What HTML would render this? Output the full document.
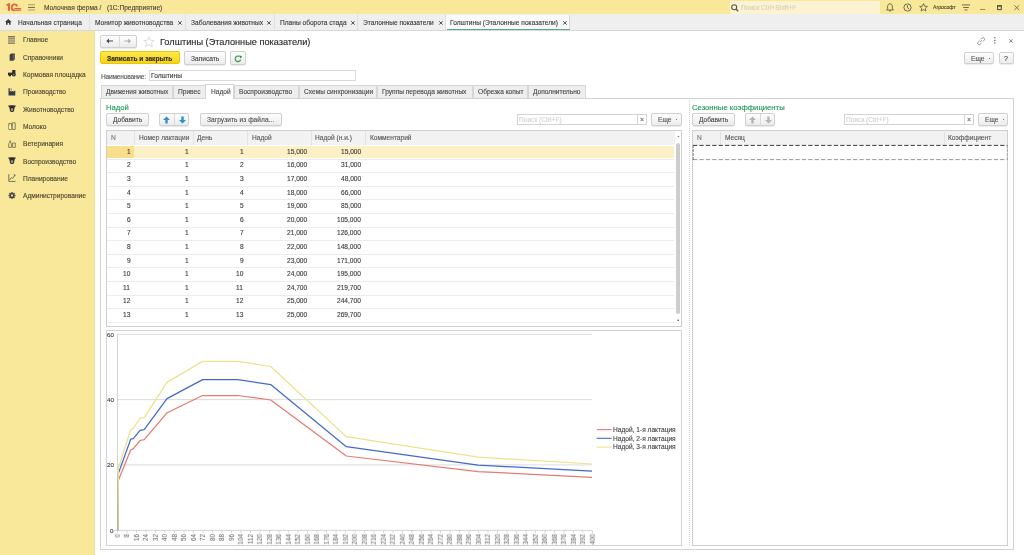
<!DOCTYPE html>
<html><head><meta charset="utf-8">
<style>
*{box-sizing:border-box}
html,body{margin:0;padding:0}
body{width:1024px;height:555px;overflow:hidden;position:relative;background:#fff;font-family:"Liberation Sans",sans-serif;font-size:6.6px;color:#3a3a3a}
.a{position:absolute}
.t{position:absolute;white-space:nowrap;line-height:1;will-change:transform;-webkit-text-stroke:0.12px currentColor}
.btn{position:absolute;background:linear-gradient(#fdfdfd,#ececec);border:1px solid #d0d0d0;border-radius:2px;box-shadow:0 0.6px 0.6px #d8d8d8}
svg{position:absolute;overflow:visible}
#wrap{position:absolute;left:0;top:0;width:1024px;height:555px}
</style></head><body><div id="wrap">
<div class="a" style="left:0.00px;top:0.00px;width:1024.00px;height:14.40px;background:#f9e899"></div><svg style="left:4.00px;top:1.00px" width="20" height="12" viewBox="0 0 20 12"><g fill="#e2603e"><path d="M2.4 3.4 L4.4 2.2 L5.9 2.2 L5.9 9.7 L3.9 9.7 L3.9 4.6 L2.8 5.2 Z"/></g><path d="M13.2 5.2 C12.8 4.0 11.8 3.3 10.6 3.3 C8.8 3.3 7.7 4.8 7.7 6.6 C7.7 8.4 8.8 9.6 10.6 9.6" fill="none" stroke="#e2603e" stroke-width="1.7"/><rect x="10.4" y="7.0" width="6.8" height="1.1" fill="#e2603e"/><rect x="10.4" y="8.6" width="6.8" height="1.2" fill="#e2603e"/></svg><svg style="left:27.80px;top:4.00px" width="7" height="7" viewBox="0 0 7 7"><rect x="0" y="0.2" width="7" height="1" fill="#a89c6a"/><rect x="0" y="2.9" width="7" height="1" fill="#6e6542"/><rect x="0" y="5.5" width="7" height="1" fill="#a89c6a"/></svg><div class="t" style="left:43.60px;top:5.22px;font-size:6.6px;color:#4a4536;">Молочная ферма /</div><div class="t" style="left:107.20px;top:5.22px;font-size:6.6px;color:#4a4536;">(1С:Предприятие)</div><div class="a" style="left:729.70px;top:1.00px;width:150.30px;height:13.00px;background:#fcf3d2;border-radius:1px"></div><svg style="left:731.00px;top:4.00px" width="8" height="8" viewBox="0 0 8 8"><circle cx="3.2" cy="3.2" r="2.5" fill="none" stroke="#555" stroke-width="1.1"/><line x1="5" y1="5" x2="7.2" y2="7.2" stroke="#555" stroke-width="1.3"/></svg><div class="t" style="left:741.00px;top:5.22px;font-size:6.6px;color:#d6cfb5;">Поиск Ctrl+Shift+F</div><svg style="left:885.50px;top:3.00px" width="8" height="9" viewBox="0 0 8 9"><path d="M4 0.8 C2.3 0.8 1.6 2.2 1.6 3.8 L1.6 5.8 L0.6 7 L7.4 7 L6.4 5.8 L6.4 3.8 C6.4 2.2 5.7 0.8 4 0.8 Z" fill="none" stroke="#5f5a45" stroke-width="0.9"/><path d="M3 7.8 L5 7.8" stroke="#5f5a45" stroke-width="0.9"/></svg><svg style="left:902.50px;top:3.00px" width="9" height="9" viewBox="0 0 9 9"><circle cx="4.5" cy="4.5" r="3.6" fill="none" stroke="#5f5a45" stroke-width="0.9"/><path d="M4.5 2.3 L4.5 4.7 L6 5.8" fill="none" stroke="#5f5a45" stroke-width="0.9"/></svg><svg style="left:918.50px;top:2.80px" width="9" height="9" viewBox="0 0 9 9"><path d="M4.5 0.6 L5.6 3.2 L8.4 3.4 L6.3 5.2 L6.9 8 L4.5 6.5 L2.1 8 L2.7 5.2 L0.6 3.4 L3.4 3.2 Z" fill="none" stroke="#5f5a45" stroke-width="0.85"/></svg><div class="t" style="left:933.30px;top:5.34px;font-size:5.1px;color:#4a4536;">Агрософт</div><svg style="left:962.00px;top:4.00px" width="8" height="8" viewBox="0 0 8 8"><rect x="0" y="0.5" width="8" height="0.9" fill="#5f5a45"/><rect x="1.2" y="3" width="5.6" height="0.9" fill="#5f5a45"/><rect x="2.5" y="5.5" width="3" height="0.9" fill="#5f5a45"/></svg><svg style="left:980.00px;top:9.00px" width="6" height="2" viewBox="0 0 6 2"><rect x="0" y="0" width="5.3" height="0.9" fill="#8f8660"/></svg><svg style="left:997.20px;top:4.80px" width="6" height="6" viewBox="0 0 6 6"><rect x="0.6" y="0.6" width="3.7" height="4" fill="none" stroke="#5e573c" stroke-width="1.1"/><rect x="0.2" y="0.2" width="4.5" height="1.5" fill="#5e573c"/></svg><svg style="left:1013.80px;top:4.80px" width="6" height="6" viewBox="0 0 6 6"><path d="M0.3 0.3 L5.2 5 M5.2 0.3 L0.3 5" stroke="#6a6346" stroke-width="0.85"/></svg><div class="a" style="left:0.00px;top:14.30px;width:1024.00px;height:16.70px;background:#efefef;border-bottom:1px solid #d9d9d9"></div><svg style="left:5.40px;top:19.20px" width="7" height="6" viewBox="0 0 7 6"><path d="M3.3 0 L6.6 3 L5.6 3 L5.6 5.8 L4 5.8 L4 4 L2.6 4 L2.6 5.8 L1 5.8 L1 3 L0 3 Z" fill="#3c3c3c"/></svg><div class="t" style="left:17.80px;top:20.42px;font-size:6.6px;color:#3a3a3a;">Начальная страница</div><div class="a" style="left:89.40px;top:14.30px;width:1.00px;height:15.90px;background:#e0e0e0"></div><div class="a" style="left:185.00px;top:14.30px;width:1.00px;height:15.90px;background:#e0e0e0"></div><div class="a" style="left:273.80px;top:14.30px;width:1.00px;height:15.90px;background:#e0e0e0"></div><div class="a" style="left:357.40px;top:14.30px;width:1.00px;height:15.90px;background:#e0e0e0"></div><div class="a" style="left:445.30px;top:14.30px;width:1.00px;height:15.90px;background:#e0e0e0"></div><div class="t" style="left:95.30px;top:20.42px;font-size:6.6px;color:#3a3a3a;">Монитор животноводства</div><svg style="left:178.30px;top:20.50px" width="4" height="4" viewBox="0 0 4 4"><path d="M0.2 0.2 L3.6 3.6 M3.6 0.2 L0.2 3.6" stroke="#4a4a4a" stroke-width="1"/></svg><div class="t" style="left:190.90px;top:20.42px;font-size:6.6px;color:#3a3a3a;">Заболевания животных</div><svg style="left:267.10px;top:20.50px" width="4" height="4" viewBox="0 0 4 4"><path d="M0.2 0.2 L3.6 3.6 M3.6 0.2 L0.2 3.6" stroke="#4a4a4a" stroke-width="1"/></svg><div class="t" style="left:279.70px;top:20.42px;font-size:6.6px;color:#3a3a3a;">Планы оборота стада</div><svg style="left:350.70px;top:20.50px" width="4" height="4" viewBox="0 0 4 4"><path d="M0.2 0.2 L3.6 3.6 M3.6 0.2 L0.2 3.6" stroke="#4a4a4a" stroke-width="1"/></svg><div class="t" style="left:363.30px;top:20.42px;font-size:6.6px;color:#3a3a3a;">Эталонные показатели</div><svg style="left:438.60px;top:20.50px" width="4" height="4" viewBox="0 0 4 4"><path d="M0.2 0.2 L3.6 3.6 M3.6 0.2 L0.2 3.6" stroke="#4a4a4a" stroke-width="1"/></svg><div class="a" style="left:446.30px;top:14.60px;width:124.20px;height:15.80px;background:#fafafa;border-right:1px solid #d9d9d9"></div><div class="a" style="left:447.00px;top:29.00px;width:123.00px;height:1.30px;background:#4fae82"></div><div class="t" style="left:450.00px;top:20.42px;font-size:6.6px;color:#3a3a3a;">Голштины (Эталонные показатели)</div><svg style="left:563.20px;top:20.50px" width="4" height="4" viewBox="0 0 4 4"><path d="M0.2 0.2 L3.6 3.6 M3.6 0.2 L0.2 3.6" stroke="#4a4a4a" stroke-width="1"/></svg><div class="a" style="left:0.00px;top:31.00px;width:94.50px;height:524.00px;background:#f9e899"></div><div class="a" style="left:94.30px;top:31.00px;width:0.70px;height:524.00px;background:#ede0a0"></div><div class="t" style="left:22.70px;top:37.42px;font-size:6.6px;color:#4a4630;">Главное</div><svg style="left:8.20px;top:35.70px" width="8" height="8" viewBox="0 0 8 8"><g fill="#7d7656"><rect x="0" y="0" width="7" height="1.2"/><rect x="0" y="2.2" width="7" height="1.2"/><rect x="0" y="4.4" width="7" height="1.2"/><rect x="0" y="6.6" width="7" height="1.2"/></g><rect x="0" y="1.2" width="7" height="1" fill="#b3ab86"/><rect x="0" y="3.4" width="7" height="1" fill="#b3ab86"/><rect x="0" y="5.6" width="7" height="1" fill="#b3ab86"/></svg><div class="t" style="left:22.70px;top:54.75px;font-size:6.6px;color:#4a4630;">Справочники</div><svg style="left:8.20px;top:53.03px" width="8" height="8" viewBox="0 0 8 8"><path d="M1.6 1.8 L3.2 0.4 L6.8 0.4 L6.8 6.2 L5.2 7.8 L1.6 7.8 Z" fill="#404040"/><path d="M5.2 1.8 L6.8 0.4 L6.8 6.2 L5.2 7.8 Z" fill="#6a6a6a"/></svg><div class="t" style="left:22.70px;top:72.08px;font-size:6.6px;color:#4a4630;">Кормовая площадка</div><svg style="left:8.20px;top:70.36px" width="8" height="8" viewBox="0 0 8 8"><g fill="#2e2e2e"><rect x="4.2" y="0" width="3.2" height="3.2"/><rect x="0" y="2.6" width="5" height="2.4"/><circle cx="1.8" cy="5.2" r="1.2"/><circle cx="5.8" cy="4.6" r="2"/></g><circle cx="5.8" cy="4.6" r="0.8" fill="#8a8a8a"/></svg><div class="t" style="left:22.70px;top:89.41px;font-size:6.6px;color:#4a4630;">Производство</div><svg style="left:8.20px;top:87.69px" width="8" height="8" viewBox="0 0 8 8"><path d="M0.5 7.5 L0.5 0.2 L1.8 0.2 L1.8 3.5 L3.5 2.4 L3.5 3.8 L5.3 2.4 L5.3 3.8 L7.3 2.4 L7.3 7.5 Z" fill="#343a48"/><rect x="2.3" y="0.6" width="1.6" height="1" fill="#6f7380"/></svg><div class="t" style="left:22.70px;top:106.74px;font-size:6.6px;color:#4a4630;">Животноводство</div><svg style="left:8.20px;top:105.02px" width="8" height="8" viewBox="0 0 8 8"><path d="M0 0.8 C1.5 0 6.5 0 8 0.8 L6.6 2.6 L6 6 C5.5 7.4 2.5 7.4 2 6 L1.4 2.6 Z" fill="#2d2d2d"/><ellipse cx="4" cy="4.6" rx="1.3" ry="1.6" fill="#9a937a"/></svg><div class="t" style="left:22.70px;top:124.07px;font-size:6.6px;color:#4a4630;">Молоко</div><svg style="left:8.20px;top:122.35px" width="8" height="8" viewBox="0 0 8 8"><g fill="none" stroke="#6d6748" stroke-width="0.8"><path d="M0.8 1.5 L3.6 1.5 L3.6 7.4 L0.8 7.4 Z"/><path d="M4.2 0.8 L7.2 0.8 L7.2 7.4 L4.2 7.4 Z"/></g><rect x="1.2" y="4" width="2" height="3" fill="#fff7d0"/></svg><div class="t" style="left:22.70px;top:141.40px;font-size:6.6px;color:#4a4630;">Ветеринария</div><svg style="left:8.20px;top:139.68px" width="8" height="8" viewBox="0 0 8 8"><g fill="none" stroke="#6d6748" stroke-width="0.8"><path d="M1.8 0.6 L1.8 2.4 L0.7 3.8 L0.7 7.4 L3.4 7.4 L3.4 3.8 L2.6 2.4 L2.6 0.6"/><path d="M4.6 3 L4.6 7.4 L7.3 7.4 L7.3 3 Z"/></g></svg><div class="t" style="left:22.70px;top:158.73px;font-size:6.6px;color:#4a4630;">Воспроизводство</div><svg style="left:8.20px;top:157.01px" width="8" height="8" viewBox="0 0 8 8"><path d="M0 0.8 C1.5 0 6.5 0 8 0.8 L6.6 2.6 L6 6 C5.5 7.4 2.5 7.4 2 6 L1.4 2.6 Z" fill="#2d2d2d"/><ellipse cx="4" cy="4.6" rx="1.3" ry="1.6" fill="#9a937a"/></svg><div class="t" style="left:22.70px;top:176.06px;font-size:6.6px;color:#4a4630;">Планирование</div><svg style="left:8.20px;top:174.34px" width="8" height="8" viewBox="0 0 8 8"><g fill="none" stroke="#555" stroke-width="0.8"><path d="M0.8 0.2 L0.8 7.4 L7.5 7.4"/><path d="M1.5 6 L3.5 3.4 L4.6 4.5 L6.8 1.2"/></g><path d="M5.4 0.6 L7.4 0.4 L7.2 2.4 Z" fill="#555"/></svg><div class="t" style="left:22.70px;top:193.39px;font-size:6.6px;color:#4a4630;">Администрирование</div><svg style="left:8.20px;top:191.67px" width="8" height="8" viewBox="0 0 8 8"><g fill="#4a4a4a"><circle cx="4" cy="3.5" r="2.6"/><rect x="3.3" y="0" width="1.4" height="7"/><rect x="0.5" y="2.8" width="7" height="1.4"/><rect x="3.3" y="0" width="1.4" height="7" transform="rotate(45 4 3.5)"/><rect x="3.3" y="0" width="1.4" height="7" transform="rotate(-45 4 3.5)"/></g><circle cx="4" cy="3.5" r="1.1" fill="#f9e9a1"/></svg><div class="btn" style="left:100.30px;top:35.30px;width:36.70px;height:12.50px;"></div><div class="a" style="left:118.80px;top:35.80px;width:0.70px;height:11.40px;background:#dcdcdc"></div><svg style="left:106.30px;top:38.00px" width="8" height="6" viewBox="0 0 8 6"><path d="M0.3 3 L3 0.6 L3 2.4 L7 2.4 L7 3.6 L3 3.6 L3 5.4 Z" fill="#444"/></svg><svg style="left:124.30px;top:38.00px" width="8" height="6" viewBox="0 0 8 6"><path d="M7 3 L4.3 0.6 L4.3 2.4 L0.3 2.4 L0.3 3.6 L4.3 3.6 L4.3 5.4 Z" fill="#aaa"/></svg><svg style="left:143.00px;top:35.50px" width="12" height="12" viewBox="0 0 12 12"><path d="M6 0.8 L7.5 4.3 L11.2 4.5 L8.3 6.9 L9.3 10.6 L6 8.6 L2.7 10.6 L3.7 6.9 L0.8 4.5 L4.5 4.3 Z" fill="none" stroke="#d5d5d5" stroke-width="0.8"/></svg><div class="t" style="left:160.00px;top:37.67px;font-size:9.2px;color:#262626;">Голштины (Эталонные показатели)</div><svg style="left:976.50px;top:36.50px" width="8" height="8" viewBox="0 0 8 8"><path d="M3.2 4.8 L4.8 3.2 M2.5 3.8 L1.2 5.1 C0.5 5.8 0.5 6.8 1.2 7.3 C1.8 7.9 2.7 7.8 3.3 7.2 L4.5 6 M5.8 4.5 L7 3.3 C7.7 2.6 7.7 1.7 7.1 1.1 C6.5 0.5 5.6 0.6 4.9 1.2 L3.7 2.4" fill="none" stroke="#777" stroke-width="0.8"/></svg><svg style="left:994.40px;top:36.80px" width="2" height="8" viewBox="0 0 2 8"><circle cx="0.8" cy="0.8" r="0.75" fill="#666"/><circle cx="0.8" cy="3.4" r="0.75" fill="#666"/><circle cx="0.8" cy="6" r="0.75" fill="#666"/></svg><svg style="left:1009.00px;top:39.00px" width="4" height="4" viewBox="0 0 4 4"><path d="M0.2 0.2 L3.6 3.6 M3.6 0.2 L0.2 3.6" stroke="#666" stroke-width="0.8"/></svg><div class="a" style="left:100.3px;top:51.4px;width:79.3px;height:13px;background:linear-gradient(#fee94e,#f5d410);border:1px solid #e5c60a;border-radius:2px"></div><div class="t" style="left:107.00px;top:55.62px;font-size:6.6px;color:#2a2a2a;font-weight:bold;">Записать и закрыть</div><div class="btn" style="left:184.00px;top:51.20px;width:42.40px;height:13.60px;"></div><div class="t" style="left:191.00px;top:55.62px;font-size:6.6px;color:#484848;">Записать</div><div class="btn" style="left:230.20px;top:51.20px;width:15.60px;height:13.60px;"></div><svg style="left:234.00px;top:54.60px" width="8" height="8" viewBox="0 0 8 8"><path d="M6.63 4.76 A2.8 2.8 0 1 1 5.4 1.38" fill="none" stroke="#3f9a45" stroke-width="1.15"/><path d="M4.9 0.6 L7.9 0.9 L6.9 3.7 Z" fill="#2f8a3a"/></svg><div class="btn" style="left:964.40px;top:51.60px;width:29.80px;height:12.80px;"></div><div class="t" style="left:971.40px;top:55.72px;font-size:6.6px;color:#555;">Еще</div><div class="a" style="left:989.00px;top:58.00px;width:1.00px;height:1.00px;background:#777"></div><div class="btn" style="left:998.80px;top:51.60px;width:15.20px;height:12.80px;"></div><div class="t" style="left:1004.30px;top:54.63px;font-size:7px;color:#444;">?</div><div class="t" style="left:100.80px;top:73.62px;font-size:6.6px;color:#555;letter-spacing:-0.2px">Наименование:</div><div class="a" style="left:148.50px;top:70.00px;width:207.20px;height:10.70px;border:1px solid #d9d9d9;background:#fff"></div><div class="t" style="left:150.80px;top:73.02px;font-size:6.6px;color:#3a3a3a;">Голштины</div><div class="a" style="left:100.00px;top:98.00px;width:914.00px;height:451.80px;border:1px solid #d3d3d3;background:#fff"></div><div class="a" style="left:100.60px;top:85.00px;width:72.90px;height:13.40px;background:#eeeeee;border:1px solid #d6d6d6;border-bottom:none"></div><div class="t" style="left:105.80px;top:88.72px;font-size:6.6px;color:#484848;">Движения животных</div><div class="a" style="left:173.00px;top:85.00px;width:32.80px;height:13.40px;background:#eeeeee;border:1px solid #d6d6d6;border-bottom:none"></div><div class="t" style="left:178.20px;top:88.72px;font-size:6.6px;color:#484848;">Привес</div><div class="a" style="left:205.30px;top:84.30px;width:28.60px;height:14.70px;background:#fff;border:1px solid #d3d3d3;border-bottom:none"></div><div class="t" style="left:210.50px;top:88.72px;font-size:6.6px;color:#484848;">Надой</div><div class="a" style="left:233.90px;top:85.00px;width:65.40px;height:13.40px;background:#eeeeee;border:1px solid #d6d6d6;border-bottom:none"></div><div class="t" style="left:239.10px;top:88.72px;font-size:6.6px;color:#484848;">Воспроизводство</div><div class="a" style="left:298.80px;top:85.00px;width:78.70px;height:13.40px;background:#eeeeee;border:1px solid #d6d6d6;border-bottom:none"></div><div class="t" style="left:304.00px;top:88.72px;font-size:6.6px;color:#484848;">Схемы синхронизации</div><div class="a" style="left:377.00px;top:85.00px;width:96.30px;height:13.40px;background:#eeeeee;border:1px solid #d6d6d6;border-bottom:none"></div><div class="t" style="left:382.20px;top:88.72px;font-size:6.6px;color:#484848;">Группы перевода животных</div><div class="a" style="left:472.80px;top:85.00px;width:55.20px;height:13.40px;background:#eeeeee;border:1px solid #d6d6d6;border-bottom:none"></div><div class="t" style="left:478.00px;top:88.72px;font-size:6.6px;color:#484848;">Обрезка копыт</div><div class="a" style="left:527.50px;top:85.00px;width:58.60px;height:13.40px;background:#eeeeee;border:1px solid #d6d6d6;border-bottom:none"></div><div class="t" style="left:532.70px;top:88.72px;font-size:6.6px;color:#484848;">Дополнительно</div><div class="t" style="left:106.00px;top:103.69px;font-size:7.7px;color:#199a55;">Надой</div><div class="btn" style="left:106.00px;top:112.60px;width:43.20px;height:13.60px;"></div><div class="t" style="left:112.90px;top:116.82px;font-size:6.6px;color:#484848;">Добавить</div><div class="btn" style="left:159.00px;top:112.60px;width:30.40px;height:13.60px;"></div><div class="a" style="left:174.20px;top:113.50px;width:0.70px;height:11.70px;background:#d8d8d8"></div><svg style="left:163.00px;top:115.50px" width="8" height="8" viewBox="0 0 8 8"><path d="M3.5 0.5 L7 4 L4.7 4 L4.7 7.6 L2.3 7.6 L2.3 4 L0 4 Z" fill="#2c8fd6"/></svg><svg style="left:178.50px;top:115.50px" width="8" height="8" viewBox="0 0 8 8"><path d="M3.5 7.6 L7 4.1 L4.7 4.1 L4.7 0.5 L2.3 0.5 L2.3 4.1 L0 4.1 Z" fill="#2c8fd6"/></svg><div class="btn" style="left:199.50px;top:112.60px;width:82.30px;height:13.60px;"></div><div class="t" style="left:207.00px;top:116.82px;font-size:6.6px;color:#505050;letter-spacing:0.05px">Загрузить из файла...</div><div class="a" style="left:516.60px;top:114.00px;width:130.10px;height:11.00px;border:1px solid #d3d3d3;background:#fff"></div><div class="a" style="left:636.50px;top:114.50px;width:0.70px;height:10.00px;background:#d3d3d3"></div><div class="t" style="left:518.50px;top:116.82px;font-size:6.6px;color:#d2d2d2;">Поиск (Ctrl+F)</div><div class="t" style="left:639.60px;top:116.33px;font-size:7px;color:#666;">×</div><div class="btn" style="left:651.40px;top:112.60px;width:30.40px;height:13.60px;"></div><div class="t" style="left:658.30px;top:116.82px;font-size:6.6px;color:#555;">Еще</div><div class="a" style="left:676.00px;top:119.20px;width:1.00px;height:1.00px;background:#777"></div><div class="a" style="left:106.20px;top:130.40px;width:575.80px;height:196.20px;border:1px solid #cfcfcf;background:#fff"></div><div class="a" style="left:107.20px;top:131.40px;width:567.80px;height:13.60px;background:#f2f2f2"></div><div class="a" style="left:133.70px;top:131.00px;width:0.60px;height:14.00px;background:#e2e2e2"></div><div class="a" style="left:192.70px;top:131.00px;width:0.60px;height:14.00px;background:#e2e2e2"></div><div class="a" style="left:247.00px;top:131.00px;width:0.60px;height:14.00px;background:#e2e2e2"></div><div class="a" style="left:311.10px;top:131.00px;width:0.60px;height:14.00px;background:#e2e2e2"></div><div class="a" style="left:364.90px;top:131.00px;width:0.60px;height:14.00px;background:#e2e2e2"></div><div class="t" style="left:111.00px;top:135.22px;font-size:6.6px;color:#777;">N</div><div class="t" style="left:138.80px;top:135.22px;font-size:6.6px;color:#585858;">Номер лактации</div><div class="t" style="left:197.00px;top:135.22px;font-size:6.6px;color:#585858;">День</div><div class="t" style="left:251.70px;top:135.22px;font-size:6.6px;color:#585858;">Надой</div><div class="t" style="left:315.40px;top:135.22px;font-size:6.6px;color:#585858;">Надой (н.и.)</div><div class="t" style="left:369.60px;top:135.22px;font-size:6.6px;color:#585858;">Комментарий</div><div class="a" style="left:107.20px;top:145.50px;width:567.30px;height:12.50px;background:#fcf0c6"></div><div class="a" style="left:107.20px;top:145.50px;width:26.80px;height:12.50px;background:#f9df8c"></div><div class="a" style="left:107.20px;top:158.50px;width:567.30px;height:0.70px;background:#ececec"></div><div class="t" style="right:893.80px;top:148.72px;font-size:6.6px;text-align:right;">1</div><div class="t" style="right:835.40px;top:148.72px;font-size:6.6px;text-align:right;">1</div><div class="t" style="right:780.70px;top:148.72px;font-size:6.6px;text-align:right;">1</div><div class="t" style="right:716.80px;top:148.72px;font-size:6.6px;text-align:right;">15,000</div><div class="t" style="right:662.80px;top:148.72px;font-size:6.6px;text-align:right;">15,000</div><div class="a" style="left:107.20px;top:172.10px;width:567.30px;height:0.70px;background:#ececec"></div><div class="t" style="right:893.80px;top:162.32px;font-size:6.6px;text-align:right;">2</div><div class="t" style="right:835.40px;top:162.32px;font-size:6.6px;text-align:right;">1</div><div class="t" style="right:780.70px;top:162.32px;font-size:6.6px;text-align:right;">2</div><div class="t" style="right:716.80px;top:162.32px;font-size:6.6px;text-align:right;">16,000</div><div class="t" style="right:662.80px;top:162.32px;font-size:6.6px;text-align:right;">31,000</div><div class="a" style="left:107.20px;top:185.70px;width:567.30px;height:0.70px;background:#ececec"></div><div class="t" style="right:893.80px;top:175.92px;font-size:6.6px;text-align:right;">3</div><div class="t" style="right:835.40px;top:175.92px;font-size:6.6px;text-align:right;">1</div><div class="t" style="right:780.70px;top:175.92px;font-size:6.6px;text-align:right;">3</div><div class="t" style="right:716.80px;top:175.92px;font-size:6.6px;text-align:right;">17,000</div><div class="t" style="right:662.80px;top:175.92px;font-size:6.6px;text-align:right;">48,000</div><div class="a" style="left:107.20px;top:199.30px;width:567.30px;height:0.70px;background:#ececec"></div><div class="t" style="right:893.80px;top:189.52px;font-size:6.6px;text-align:right;">4</div><div class="t" style="right:835.40px;top:189.52px;font-size:6.6px;text-align:right;">1</div><div class="t" style="right:780.70px;top:189.52px;font-size:6.6px;text-align:right;">4</div><div class="t" style="right:716.80px;top:189.52px;font-size:6.6px;text-align:right;">18,000</div><div class="t" style="right:662.80px;top:189.52px;font-size:6.6px;text-align:right;">66,000</div><div class="a" style="left:107.20px;top:212.90px;width:567.30px;height:0.70px;background:#ececec"></div><div class="t" style="right:893.80px;top:203.12px;font-size:6.6px;text-align:right;">5</div><div class="t" style="right:835.40px;top:203.12px;font-size:6.6px;text-align:right;">1</div><div class="t" style="right:780.70px;top:203.12px;font-size:6.6px;text-align:right;">5</div><div class="t" style="right:716.80px;top:203.12px;font-size:6.6px;text-align:right;">19,000</div><div class="t" style="right:662.80px;top:203.12px;font-size:6.6px;text-align:right;">85,000</div><div class="a" style="left:107.20px;top:226.50px;width:567.30px;height:0.70px;background:#ececec"></div><div class="t" style="right:893.80px;top:216.72px;font-size:6.6px;text-align:right;">6</div><div class="t" style="right:835.40px;top:216.72px;font-size:6.6px;text-align:right;">1</div><div class="t" style="right:780.70px;top:216.72px;font-size:6.6px;text-align:right;">6</div><div class="t" style="right:716.80px;top:216.72px;font-size:6.6px;text-align:right;">20,000</div><div class="t" style="right:662.80px;top:216.72px;font-size:6.6px;text-align:right;">105,000</div><div class="a" style="left:107.20px;top:240.10px;width:567.30px;height:0.70px;background:#ececec"></div><div class="t" style="right:893.80px;top:230.32px;font-size:6.6px;text-align:right;">7</div><div class="t" style="right:835.40px;top:230.32px;font-size:6.6px;text-align:right;">1</div><div class="t" style="right:780.70px;top:230.32px;font-size:6.6px;text-align:right;">7</div><div class="t" style="right:716.80px;top:230.32px;font-size:6.6px;text-align:right;">21,000</div><div class="t" style="right:662.80px;top:230.32px;font-size:6.6px;text-align:right;">126,000</div><div class="a" style="left:107.20px;top:253.70px;width:567.30px;height:0.70px;background:#ececec"></div><div class="t" style="right:893.80px;top:243.92px;font-size:6.6px;text-align:right;">8</div><div class="t" style="right:835.40px;top:243.92px;font-size:6.6px;text-align:right;">1</div><div class="t" style="right:780.70px;top:243.92px;font-size:6.6px;text-align:right;">8</div><div class="t" style="right:716.80px;top:243.92px;font-size:6.6px;text-align:right;">22,000</div><div class="t" style="right:662.80px;top:243.92px;font-size:6.6px;text-align:right;">148,000</div><div class="a" style="left:107.20px;top:267.30px;width:567.30px;height:0.70px;background:#ececec"></div><div class="t" style="right:893.80px;top:257.52px;font-size:6.6px;text-align:right;">9</div><div class="t" style="right:835.40px;top:257.52px;font-size:6.6px;text-align:right;">1</div><div class="t" style="right:780.70px;top:257.52px;font-size:6.6px;text-align:right;">9</div><div class="t" style="right:716.80px;top:257.52px;font-size:6.6px;text-align:right;">23,000</div><div class="t" style="right:662.80px;top:257.52px;font-size:6.6px;text-align:right;">171,000</div><div class="a" style="left:107.20px;top:280.90px;width:567.30px;height:0.70px;background:#ececec"></div><div class="t" style="right:893.80px;top:271.12px;font-size:6.6px;text-align:right;">10</div><div class="t" style="right:835.40px;top:271.12px;font-size:6.6px;text-align:right;">1</div><div class="t" style="right:780.70px;top:271.12px;font-size:6.6px;text-align:right;">10</div><div class="t" style="right:716.80px;top:271.12px;font-size:6.6px;text-align:right;">24,000</div><div class="t" style="right:662.80px;top:271.12px;font-size:6.6px;text-align:right;">195,000</div><div class="a" style="left:107.20px;top:294.50px;width:567.30px;height:0.70px;background:#ececec"></div><div class="t" style="right:893.80px;top:284.72px;font-size:6.6px;text-align:right;">11</div><div class="t" style="right:835.40px;top:284.72px;font-size:6.6px;text-align:right;">1</div><div class="t" style="right:780.70px;top:284.72px;font-size:6.6px;text-align:right;">11</div><div class="t" style="right:716.80px;top:284.72px;font-size:6.6px;text-align:right;">24,700</div><div class="t" style="right:662.80px;top:284.72px;font-size:6.6px;text-align:right;">219,700</div><div class="a" style="left:107.20px;top:308.10px;width:567.30px;height:0.70px;background:#ececec"></div><div class="t" style="right:893.80px;top:298.32px;font-size:6.6px;text-align:right;">12</div><div class="t" style="right:835.40px;top:298.32px;font-size:6.6px;text-align:right;">1</div><div class="t" style="right:780.70px;top:298.32px;font-size:6.6px;text-align:right;">12</div><div class="t" style="right:716.80px;top:298.32px;font-size:6.6px;text-align:right;">25,000</div><div class="t" style="right:662.80px;top:298.32px;font-size:6.6px;text-align:right;">244,700</div><div class="a" style="left:107.20px;top:321.70px;width:567.30px;height:0.70px;background:#ececec"></div><div class="t" style="right:893.80px;top:311.92px;font-size:6.6px;text-align:right;">13</div><div class="t" style="right:835.40px;top:311.92px;font-size:6.6px;text-align:right;">1</div><div class="t" style="right:780.70px;top:311.92px;font-size:6.6px;text-align:right;">13</div><div class="t" style="right:716.80px;top:311.92px;font-size:6.6px;text-align:right;">25,000</div><div class="t" style="right:662.80px;top:311.92px;font-size:6.6px;text-align:right;">269,700</div><div class="a" style="left:675.90px;top:143.00px;width:3.90px;height:171.00px;background:#cdcdcd;border-radius:2px"></div><svg style="left:676.50px;top:135.00px" width="3" height="3" viewBox="0 0 3 3"><path d="M0.3 2 L1.4 0.8 L2.5 2 Z" fill="#777"/></svg><svg style="left:676.80px;top:319.00px" width="3" height="3" viewBox="0 0 3 3"><rect x="0.5" y="0.6" width="1.4" height="1.4" fill="#555"/></svg><div class="a" style="left:106.00px;top:330.30px;width:575.80px;height:215.70px;border:1px solid #d3d3d3;background:#fff"></div><svg style="left:0;top:0" width="1024" height="555"><line x1="117" y1="464.90" x2="592" y2="464.90" stroke="#d8d8d8" stroke-width="0.9"/><line x1="117" y1="399.60" x2="592" y2="399.60" stroke="#d8d8d8" stroke-width="0.9"/><line x1="117" y1="334.30" x2="592" y2="334.30" stroke="#d8d8d8" stroke-width="0.9"/><line x1="117.5" y1="334" x2="117.5" y2="530.5" stroke="#cfcfcf" stroke-width="0.9"/><line x1="113.5" y1="530.4" x2="592" y2="530.4" stroke="#cfcfcf" stroke-width="0.9"/><line x1="117.50" y1="530.4" x2="117.50" y2="533" stroke="#cfcfcf" stroke-width="0.8"/><line x1="127.00" y1="530.4" x2="127.00" y2="533" stroke="#cfcfcf" stroke-width="0.8"/><line x1="136.50" y1="530.4" x2="136.50" y2="533" stroke="#cfcfcf" stroke-width="0.8"/><line x1="146.00" y1="530.4" x2="146.00" y2="533" stroke="#cfcfcf" stroke-width="0.8"/><line x1="155.50" y1="530.4" x2="155.50" y2="533" stroke="#cfcfcf" stroke-width="0.8"/><line x1="165.00" y1="530.4" x2="165.00" y2="533" stroke="#cfcfcf" stroke-width="0.8"/><line x1="174.50" y1="530.4" x2="174.50" y2="533" stroke="#cfcfcf" stroke-width="0.8"/><line x1="184.00" y1="530.4" x2="184.00" y2="533" stroke="#cfcfcf" stroke-width="0.8"/><line x1="193.50" y1="530.4" x2="193.50" y2="533" stroke="#cfcfcf" stroke-width="0.8"/><line x1="203.00" y1="530.4" x2="203.00" y2="533" stroke="#cfcfcf" stroke-width="0.8"/><line x1="212.50" y1="530.4" x2="212.50" y2="533" stroke="#cfcfcf" stroke-width="0.8"/><line x1="222.00" y1="530.4" x2="222.00" y2="533" stroke="#cfcfcf" stroke-width="0.8"/><line x1="231.50" y1="530.4" x2="231.50" y2="533" stroke="#cfcfcf" stroke-width="0.8"/><line x1="241.00" y1="530.4" x2="241.00" y2="533" stroke="#cfcfcf" stroke-width="0.8"/><line x1="250.50" y1="530.4" x2="250.50" y2="533" stroke="#cfcfcf" stroke-width="0.8"/><line x1="260.00" y1="530.4" x2="260.00" y2="533" stroke="#cfcfcf" stroke-width="0.8"/><line x1="269.50" y1="530.4" x2="269.50" y2="533" stroke="#cfcfcf" stroke-width="0.8"/><line x1="279.00" y1="530.4" x2="279.00" y2="533" stroke="#cfcfcf" stroke-width="0.8"/><line x1="288.50" y1="530.4" x2="288.50" y2="533" stroke="#cfcfcf" stroke-width="0.8"/><line x1="298.00" y1="530.4" x2="298.00" y2="533" stroke="#cfcfcf" stroke-width="0.8"/><line x1="307.50" y1="530.4" x2="307.50" y2="533" stroke="#cfcfcf" stroke-width="0.8"/><line x1="317.00" y1="530.4" x2="317.00" y2="533" stroke="#cfcfcf" stroke-width="0.8"/><line x1="326.50" y1="530.4" x2="326.50" y2="533" stroke="#cfcfcf" stroke-width="0.8"/><line x1="336.00" y1="530.4" x2="336.00" y2="533" stroke="#cfcfcf" stroke-width="0.8"/><line x1="345.50" y1="530.4" x2="345.50" y2="533" stroke="#cfcfcf" stroke-width="0.8"/><line x1="355.00" y1="530.4" x2="355.00" y2="533" stroke="#cfcfcf" stroke-width="0.8"/><line x1="364.50" y1="530.4" x2="364.50" y2="533" stroke="#cfcfcf" stroke-width="0.8"/><line x1="374.00" y1="530.4" x2="374.00" y2="533" stroke="#cfcfcf" stroke-width="0.8"/><line x1="383.50" y1="530.4" x2="383.50" y2="533" stroke="#cfcfcf" stroke-width="0.8"/><line x1="393.00" y1="530.4" x2="393.00" y2="533" stroke="#cfcfcf" stroke-width="0.8"/><line x1="402.50" y1="530.4" x2="402.50" y2="533" stroke="#cfcfcf" stroke-width="0.8"/><line x1="412.00" y1="530.4" x2="412.00" y2="533" stroke="#cfcfcf" stroke-width="0.8"/><line x1="421.50" y1="530.4" x2="421.50" y2="533" stroke="#cfcfcf" stroke-width="0.8"/><line x1="431.00" y1="530.4" x2="431.00" y2="533" stroke="#cfcfcf" stroke-width="0.8"/><line x1="440.50" y1="530.4" x2="440.50" y2="533" stroke="#cfcfcf" stroke-width="0.8"/><line x1="450.00" y1="530.4" x2="450.00" y2="533" stroke="#cfcfcf" stroke-width="0.8"/><line x1="459.50" y1="530.4" x2="459.50" y2="533" stroke="#cfcfcf" stroke-width="0.8"/><line x1="469.00" y1="530.4" x2="469.00" y2="533" stroke="#cfcfcf" stroke-width="0.8"/><line x1="478.50" y1="530.4" x2="478.50" y2="533" stroke="#cfcfcf" stroke-width="0.8"/><line x1="488.00" y1="530.4" x2="488.00" y2="533" stroke="#cfcfcf" stroke-width="0.8"/><line x1="497.50" y1="530.4" x2="497.50" y2="533" stroke="#cfcfcf" stroke-width="0.8"/><line x1="507.00" y1="530.4" x2="507.00" y2="533" stroke="#cfcfcf" stroke-width="0.8"/><line x1="516.50" y1="530.4" x2="516.50" y2="533" stroke="#cfcfcf" stroke-width="0.8"/><line x1="526.00" y1="530.4" x2="526.00" y2="533" stroke="#cfcfcf" stroke-width="0.8"/><line x1="535.50" y1="530.4" x2="535.50" y2="533" stroke="#cfcfcf" stroke-width="0.8"/><line x1="545.00" y1="530.4" x2="545.00" y2="533" stroke="#cfcfcf" stroke-width="0.8"/><line x1="554.50" y1="530.4" x2="554.50" y2="533" stroke="#cfcfcf" stroke-width="0.8"/><line x1="564.00" y1="530.4" x2="564.00" y2="533" stroke="#cfcfcf" stroke-width="0.8"/><line x1="573.50" y1="530.4" x2="573.50" y2="533" stroke="#cfcfcf" stroke-width="0.8"/><line x1="583.00" y1="530.4" x2="583.00" y2="533" stroke="#cfcfcf" stroke-width="0.8"/><line x1="592.50" y1="530.4" x2="592.50" y2="533" stroke="#cfcfcf" stroke-width="0.8"/><polyline points="118.1,530.2 118.4,480.2 130.7,450.0 133.4,448.6 140.1,440.5 144.2,439.7 167.2,412.7 202.6,395.5 237.9,395.5 270.7,400.0 346.3,456.0 478.0,471.6 592.0,477.4" fill="none" stroke="#e67b74" stroke-width="1.25" stroke-linejoin="round"/><polyline points="118.1,530.2 118.4,473.4 130.7,439.2 133.4,438.6 140.0,430.3 144.2,429.7 167.0,398.6 202.6,379.6 237.9,379.6 270.7,384.6 346.3,446.7 478.0,465.1 592.0,471.1" fill="none" stroke="#4568cc" stroke-width="1.25" stroke-linejoin="round"/><polyline points="118.1,530.2 118.4,468.3 130.7,429.7 133.4,428.4 140.0,418.4 144.2,417.6 167.0,382.4 202.6,361.4 237.9,361.4 270.7,366.5 346.3,436.6 478.0,457.2 592.0,464.0" fill="none" stroke="#ece28e" stroke-width="1.25" stroke-linejoin="round"/><line x1="596.7" y1="429.6" x2="611.7" y2="429.6" stroke="#e67b74" stroke-width="1.1"/><line x1="596.7" y1="438.3" x2="611.7" y2="438.3" stroke="#4568cc" stroke-width="1.1"/><line x1="596.7" y1="447.1" x2="611.7" y2="447.1" stroke="#ece28e" stroke-width="1.1"/></svg><div class="t" style="right:910.40px;top:527.71px;font-size:6.2px;text-align:right;color:#3a3a3a;">0</div><div class="t" style="right:910.40px;top:462.41px;font-size:6.2px;text-align:right;color:#3a3a3a;">20</div><div class="t" style="right:910.40px;top:397.11px;font-size:6.2px;text-align:right;color:#3a3a3a;">40</div><div class="t" style="right:910.40px;top:331.81px;font-size:6.2px;text-align:right;color:#3a3a3a;">60</div><div class="t" style="left:613.00px;top:426.92px;font-size:6.6px;color:#444;">Надой, 1-я лактация</div><div class="t" style="left:613.00px;top:435.62px;font-size:6.6px;color:#444;">Надой, 2-я лактация</div><div class="t" style="left:613.00px;top:444.32px;font-size:6.6px;color:#444;">Надой, 3-я лактация</div><div class="t" style="left:117.50px;top:533.8px;font-size:6.3px;color:#5a5a5a;-webkit-text-stroke:0;transform-origin:0 0;transform:rotate(-90deg) translate(-100%,-50%)"><span>0</span></div><div class="t" style="left:127.00px;top:533.8px;font-size:6.3px;color:#5a5a5a;-webkit-text-stroke:0;transform-origin:0 0;transform:rotate(-90deg) translate(-100%,-50%)"><span>8</span></div><div class="t" style="left:136.50px;top:533.8px;font-size:6.3px;color:#5a5a5a;-webkit-text-stroke:0;transform-origin:0 0;transform:rotate(-90deg) translate(-100%,-50%)"><span>16</span></div><div class="t" style="left:146.00px;top:533.8px;font-size:6.3px;color:#5a5a5a;-webkit-text-stroke:0;transform-origin:0 0;transform:rotate(-90deg) translate(-100%,-50%)"><span>24</span></div><div class="t" style="left:155.50px;top:533.8px;font-size:6.3px;color:#5a5a5a;-webkit-text-stroke:0;transform-origin:0 0;transform:rotate(-90deg) translate(-100%,-50%)"><span>32</span></div><div class="t" style="left:165.00px;top:533.8px;font-size:6.3px;color:#5a5a5a;-webkit-text-stroke:0;transform-origin:0 0;transform:rotate(-90deg) translate(-100%,-50%)"><span>40</span></div><div class="t" style="left:174.50px;top:533.8px;font-size:6.3px;color:#5a5a5a;-webkit-text-stroke:0;transform-origin:0 0;transform:rotate(-90deg) translate(-100%,-50%)"><span>48</span></div><div class="t" style="left:184.00px;top:533.8px;font-size:6.3px;color:#5a5a5a;-webkit-text-stroke:0;transform-origin:0 0;transform:rotate(-90deg) translate(-100%,-50%)"><span>56</span></div><div class="t" style="left:193.50px;top:533.8px;font-size:6.3px;color:#5a5a5a;-webkit-text-stroke:0;transform-origin:0 0;transform:rotate(-90deg) translate(-100%,-50%)"><span>64</span></div><div class="t" style="left:203.00px;top:533.8px;font-size:6.3px;color:#5a5a5a;-webkit-text-stroke:0;transform-origin:0 0;transform:rotate(-90deg) translate(-100%,-50%)"><span>72</span></div><div class="t" style="left:212.50px;top:533.8px;font-size:6.3px;color:#5a5a5a;-webkit-text-stroke:0;transform-origin:0 0;transform:rotate(-90deg) translate(-100%,-50%)"><span>80</span></div><div class="t" style="left:222.00px;top:533.8px;font-size:6.3px;color:#5a5a5a;-webkit-text-stroke:0;transform-origin:0 0;transform:rotate(-90deg) translate(-100%,-50%)"><span>88</span></div><div class="t" style="left:231.50px;top:533.8px;font-size:6.3px;color:#5a5a5a;-webkit-text-stroke:0;transform-origin:0 0;transform:rotate(-90deg) translate(-100%,-50%)"><span>96</span></div><div class="t" style="left:241.00px;top:533.8px;font-size:6.3px;color:#5a5a5a;-webkit-text-stroke:0;transform-origin:0 0;transform:rotate(-90deg) translate(-100%,-50%)"><span>104</span></div><div class="t" style="left:250.50px;top:533.8px;font-size:6.3px;color:#5a5a5a;-webkit-text-stroke:0;transform-origin:0 0;transform:rotate(-90deg) translate(-100%,-50%)"><span>112</span></div><div class="t" style="left:260.00px;top:533.8px;font-size:6.3px;color:#5a5a5a;-webkit-text-stroke:0;transform-origin:0 0;transform:rotate(-90deg) translate(-100%,-50%)"><span>120</span></div><div class="t" style="left:269.50px;top:533.8px;font-size:6.3px;color:#5a5a5a;-webkit-text-stroke:0;transform-origin:0 0;transform:rotate(-90deg) translate(-100%,-50%)"><span>128</span></div><div class="t" style="left:279.00px;top:533.8px;font-size:6.3px;color:#5a5a5a;-webkit-text-stroke:0;transform-origin:0 0;transform:rotate(-90deg) translate(-100%,-50%)"><span>136</span></div><div class="t" style="left:288.50px;top:533.8px;font-size:6.3px;color:#5a5a5a;-webkit-text-stroke:0;transform-origin:0 0;transform:rotate(-90deg) translate(-100%,-50%)"><span>144</span></div><div class="t" style="left:298.00px;top:533.8px;font-size:6.3px;color:#5a5a5a;-webkit-text-stroke:0;transform-origin:0 0;transform:rotate(-90deg) translate(-100%,-50%)"><span>152</span></div><div class="t" style="left:307.50px;top:533.8px;font-size:6.3px;color:#5a5a5a;-webkit-text-stroke:0;transform-origin:0 0;transform:rotate(-90deg) translate(-100%,-50%)"><span>160</span></div><div class="t" style="left:317.00px;top:533.8px;font-size:6.3px;color:#5a5a5a;-webkit-text-stroke:0;transform-origin:0 0;transform:rotate(-90deg) translate(-100%,-50%)"><span>168</span></div><div class="t" style="left:326.50px;top:533.8px;font-size:6.3px;color:#5a5a5a;-webkit-text-stroke:0;transform-origin:0 0;transform:rotate(-90deg) translate(-100%,-50%)"><span>176</span></div><div class="t" style="left:336.00px;top:533.8px;font-size:6.3px;color:#5a5a5a;-webkit-text-stroke:0;transform-origin:0 0;transform:rotate(-90deg) translate(-100%,-50%)"><span>184</span></div><div class="t" style="left:345.50px;top:533.8px;font-size:6.3px;color:#5a5a5a;-webkit-text-stroke:0;transform-origin:0 0;transform:rotate(-90deg) translate(-100%,-50%)"><span>192</span></div><div class="t" style="left:355.00px;top:533.8px;font-size:6.3px;color:#5a5a5a;-webkit-text-stroke:0;transform-origin:0 0;transform:rotate(-90deg) translate(-100%,-50%)"><span>200</span></div><div class="t" style="left:364.50px;top:533.8px;font-size:6.3px;color:#5a5a5a;-webkit-text-stroke:0;transform-origin:0 0;transform:rotate(-90deg) translate(-100%,-50%)"><span>208</span></div><div class="t" style="left:374.00px;top:533.8px;font-size:6.3px;color:#5a5a5a;-webkit-text-stroke:0;transform-origin:0 0;transform:rotate(-90deg) translate(-100%,-50%)"><span>216</span></div><div class="t" style="left:383.50px;top:533.8px;font-size:6.3px;color:#5a5a5a;-webkit-text-stroke:0;transform-origin:0 0;transform:rotate(-90deg) translate(-100%,-50%)"><span>224</span></div><div class="t" style="left:393.00px;top:533.8px;font-size:6.3px;color:#5a5a5a;-webkit-text-stroke:0;transform-origin:0 0;transform:rotate(-90deg) translate(-100%,-50%)"><span>232</span></div><div class="t" style="left:402.50px;top:533.8px;font-size:6.3px;color:#5a5a5a;-webkit-text-stroke:0;transform-origin:0 0;transform:rotate(-90deg) translate(-100%,-50%)"><span>240</span></div><div class="t" style="left:412.00px;top:533.8px;font-size:6.3px;color:#5a5a5a;-webkit-text-stroke:0;transform-origin:0 0;transform:rotate(-90deg) translate(-100%,-50%)"><span>248</span></div><div class="t" style="left:421.50px;top:533.8px;font-size:6.3px;color:#5a5a5a;-webkit-text-stroke:0;transform-origin:0 0;transform:rotate(-90deg) translate(-100%,-50%)"><span>256</span></div><div class="t" style="left:431.00px;top:533.8px;font-size:6.3px;color:#5a5a5a;-webkit-text-stroke:0;transform-origin:0 0;transform:rotate(-90deg) translate(-100%,-50%)"><span>264</span></div><div class="t" style="left:440.50px;top:533.8px;font-size:6.3px;color:#5a5a5a;-webkit-text-stroke:0;transform-origin:0 0;transform:rotate(-90deg) translate(-100%,-50%)"><span>272</span></div><div class="t" style="left:450.00px;top:533.8px;font-size:6.3px;color:#5a5a5a;-webkit-text-stroke:0;transform-origin:0 0;transform:rotate(-90deg) translate(-100%,-50%)"><span>280</span></div><div class="t" style="left:459.50px;top:533.8px;font-size:6.3px;color:#5a5a5a;-webkit-text-stroke:0;transform-origin:0 0;transform:rotate(-90deg) translate(-100%,-50%)"><span>288</span></div><div class="t" style="left:469.00px;top:533.8px;font-size:6.3px;color:#5a5a5a;-webkit-text-stroke:0;transform-origin:0 0;transform:rotate(-90deg) translate(-100%,-50%)"><span>296</span></div><div class="t" style="left:478.50px;top:533.8px;font-size:6.3px;color:#5a5a5a;-webkit-text-stroke:0;transform-origin:0 0;transform:rotate(-90deg) translate(-100%,-50%)"><span>304</span></div><div class="t" style="left:488.00px;top:533.8px;font-size:6.3px;color:#5a5a5a;-webkit-text-stroke:0;transform-origin:0 0;transform:rotate(-90deg) translate(-100%,-50%)"><span>312</span></div><div class="t" style="left:497.50px;top:533.8px;font-size:6.3px;color:#5a5a5a;-webkit-text-stroke:0;transform-origin:0 0;transform:rotate(-90deg) translate(-100%,-50%)"><span>320</span></div><div class="t" style="left:507.00px;top:533.8px;font-size:6.3px;color:#5a5a5a;-webkit-text-stroke:0;transform-origin:0 0;transform:rotate(-90deg) translate(-100%,-50%)"><span>328</span></div><div class="t" style="left:516.50px;top:533.8px;font-size:6.3px;color:#5a5a5a;-webkit-text-stroke:0;transform-origin:0 0;transform:rotate(-90deg) translate(-100%,-50%)"><span>336</span></div><div class="t" style="left:526.00px;top:533.8px;font-size:6.3px;color:#5a5a5a;-webkit-text-stroke:0;transform-origin:0 0;transform:rotate(-90deg) translate(-100%,-50%)"><span>344</span></div><div class="t" style="left:535.50px;top:533.8px;font-size:6.3px;color:#5a5a5a;-webkit-text-stroke:0;transform-origin:0 0;transform:rotate(-90deg) translate(-100%,-50%)"><span>352</span></div><div class="t" style="left:545.00px;top:533.8px;font-size:6.3px;color:#5a5a5a;-webkit-text-stroke:0;transform-origin:0 0;transform:rotate(-90deg) translate(-100%,-50%)"><span>360</span></div><div class="t" style="left:554.50px;top:533.8px;font-size:6.3px;color:#5a5a5a;-webkit-text-stroke:0;transform-origin:0 0;transform:rotate(-90deg) translate(-100%,-50%)"><span>368</span></div><div class="t" style="left:564.00px;top:533.8px;font-size:6.3px;color:#5a5a5a;-webkit-text-stroke:0;transform-origin:0 0;transform:rotate(-90deg) translate(-100%,-50%)"><span>376</span></div><div class="t" style="left:573.50px;top:533.8px;font-size:6.3px;color:#5a5a5a;-webkit-text-stroke:0;transform-origin:0 0;transform:rotate(-90deg) translate(-100%,-50%)"><span>384</span></div><div class="t" style="left:583.00px;top:533.8px;font-size:6.3px;color:#5a5a5a;-webkit-text-stroke:0;transform-origin:0 0;transform:rotate(-90deg) translate(-100%,-50%)"><span>392</span></div><div class="t" style="left:592.50px;top:533.8px;font-size:6.3px;color:#5a5a5a;-webkit-text-stroke:0;transform-origin:0 0;transform:rotate(-90deg) translate(-100%,-50%)"><span>400</span></div><div class="a" style="left:689.40px;top:100.00px;width:0.60px;height:446.00px;background:repeating-linear-gradient(#d0d0d0 0 0.8px,transparent 0.8px 2px)"></div><div class="t" style="left:692.00px;top:103.69px;font-size:7.7px;color:#199a55;">Сезонные коэффициенты</div><div class="btn" style="left:692.00px;top:112.60px;width:42.90px;height:13.60px;"></div><div class="t" style="left:698.50px;top:116.82px;font-size:6.6px;color:#484848;">Добавить</div><div class="btn" style="left:745.00px;top:112.60px;width:30.40px;height:13.60px;"></div><div class="a" style="left:760.20px;top:113.90px;width:0.70px;height:11.30px;background:#d8d8d8"></div><svg style="left:749.00px;top:115.50px" width="8" height="8" viewBox="0 0 8 8"><path d="M3.5 0.5 L7 4 L4.7 4 L4.7 7.6 L2.3 7.6 L2.3 4 L0 4 Z" fill="#b5b5b5"/></svg><svg style="left:764.50px;top:115.50px" width="8" height="8" viewBox="0 0 8 8"><path d="M3.5 7.6 L7 4.1 L4.7 4.1 L4.7 0.5 L2.3 0.5 L2.3 4.1 L0 4.1 Z" fill="#b5b5b5"/></svg><div class="a" style="left:843.60px;top:114.00px;width:130.40px;height:11.00px;border:1px solid #d3d3d3;background:#fff"></div><div class="a" style="left:963.80px;top:114.50px;width:0.70px;height:10.00px;background:#d3d3d3"></div><div class="t" style="left:845.50px;top:116.82px;font-size:6.6px;color:#d2d2d2;">Поиск (Ctrl+F)</div><div class="t" style="left:966.80px;top:116.33px;font-size:7px;color:#666;">×</div><div class="btn" style="left:978.30px;top:112.60px;width:29.90px;height:13.60px;"></div><div class="t" style="left:985.00px;top:116.82px;font-size:6.6px;color:#555;">Еще</div><div class="a" style="left:1003.00px;top:119.20px;width:1.00px;height:1.00px;background:#777"></div><div class="a" style="left:692.20px;top:129.80px;width:316.00px;height:416.10px;border:1px solid #cfcfcf;background:#fff"></div><div class="a" style="left:693.20px;top:130.80px;width:314.00px;height:14.40px;background:#f2f2f2"></div><div class="a" style="left:720.00px;top:131.50px;width:0.60px;height:13.70px;background:#e2e2e2"></div><div class="a" style="left:943.50px;top:131.50px;width:0.60px;height:13.70px;background:#e2e2e2"></div><div class="t" style="left:696.50px;top:135.32px;font-size:6.6px;color:#777;">N</div><div class="t" style="left:724.50px;top:135.32px;font-size:6.6px;color:#585858;">Месяц</div><div class="t" style="left:947.50px;top:135.32px;font-size:6.6px;color:#585858;">Коэффициент</div><svg style="left:0.00px;top:0.00px" width="1024" height="555" viewBox="0 0 1024 555"><line x1="693" y1="145.4" x2="1007.5" y2="145.4" stroke="#3c3c3c" stroke-width="1" stroke-dasharray="4.3 2.1"/><line x1="693" y1="159.6" x2="1007.5" y2="159.6" stroke="#8a8a8a" stroke-width="0.9" stroke-dasharray="4.3 2.1"/><line x1="693.2" y1="145" x2="693.2" y2="160" stroke="#666" stroke-width="0.8" stroke-dasharray="3 1"/><line x1="1007.3" y1="145" x2="1007.3" y2="160" stroke="#999" stroke-width="0.8" stroke-dasharray="3 1"/></svg></div></body></html>
